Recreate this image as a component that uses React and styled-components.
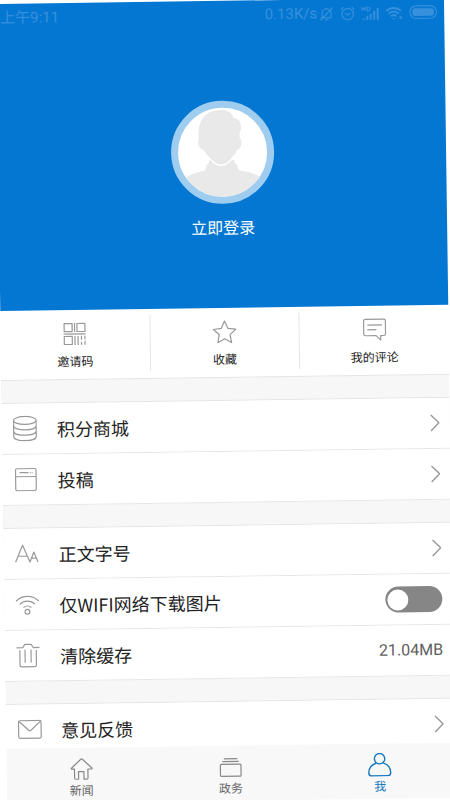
import { useState } from "react";
import styled, { createGlobalStyle } from "styled-components";

const GlobalStyle = createGlobalStyle`
  * {
    box-sizing: border-box;
  }

  body {
    margin: 0;
    background-color: white;
    color: #222;
    font-family: Roboto, "Noto Sans CJK SC", sans-serif;
  }

  button {
    border: 0;
    padding: 0;
    background: none;
    color: inherit;
    font: inherit;
    cursor: pointer;
  }

  a {
    color: inherit;
    text-decoration: none;
  }
`;

const Page = styled.div`
  height: 100vh;
  overflow: hidden;
`;

const Screen = styled.div`
  display: flex;
  flex-direction: column;
  height: 100%;
  margin: 4px 6px 0 -4px;
  background-color: white;
  transform: rotate(-0.8deg);
  transform-origin: 0 0;
`;

const Header = styled.header`
  flex: none;
  display: flex;
  flex-direction: column;
  align-items: center;
  height: 307px;
  background-color: #0477d2;
`;

const StatusBar = styled.div`
  display: flex;
  align-items: center;
  width: 100%;
  height: 28px;
  padding: 0 7px 0 4px;
  color: #3790dc;
  font-size: 15px;
  line-height: 20px;
`;

const StatusIcons = styled.div`
  display: flex;
  align-items: center;
  gap: 6px;
  margin-left: 2px;
`;

const Speed = styled.span`
  margin-left: auto;
`;

const Login = styled.button`
  display: flex;
  flex-direction: column;
  align-items: center;
  gap: 13px;
  margin-top: 72px;
  color: white;
  font-size: 16px;
  line-height: 24px;
`;

const Avatar = styled.span`
  width: 103px;
  height: 103px;
  border: 7px solid #9fcdef;
  border-radius: 50%;
  background-color: white;
  overflow: hidden;

  svg {
    display: block;
  }
`;

const Shortcuts = styled.nav`
  flex: none;
  display: flex;
  height: 70px;
  padding: 6px 0 7px;
  border-bottom: 1px solid #e4e4e4;
`;

const Shortcut = styled.button`
  flex: 1;
  display: flex;
  flex-direction: column;
  align-items: center;
  justify-content: flex-start;
  gap: 7px;
  padding-top: 6px;
  font-size: 12px;
  line-height: 18px;

  & + & {
    border-left: 1px solid #e4e4e4;
  }
`;

const Settings = styled.main`
  flex: 1;
  min-height: 0;
  overflow: hidden;
`;

const Group = styled.section`
  padding-top: 23px;
  background: #f7f7f7;
  box-shadow: inset 0 22px #f7f7f7, inset 0 23px #e4e4e4;
`;

const Row = styled.div`
  display: flex;
  align-items: center;
  width: 100%;
  height: 51px;
  padding: 0 10px 0 11px;
  border-bottom: 1px solid #e6e6e6;
  background-color: white;
  font-size: 18px;
  line-height: 26px;
  text-align: left;
`;

const RowIcon = styled.span`
  display: flex;
  width: 24px;
  margin-right: 20px;
`;

const RowLabel = styled.span`
  flex: 1;
  font-family: "Noto Sans CJK SC", sans-serif;
`;

const Value = styled.span`
  color: #606060;
  font-size: 16px;
`;

const Toggle = styled.input`
  appearance: none;
  display: flex;
  align-items: center;
  width: 57px;
  height: 26px;
  margin: 0;
  padding: 0 2px;
  border-radius: 13px;
  background-color: ${(props) => (props.checked ? "#0477d2" : "#868686")};
  cursor: pointer;

  &::before {
    content: "";
    width: 21px;
    height: 21px;
    margin-left: ${(props) => (props.checked ? "auto" : "0")};
    border-radius: 50%;
    background-color: white;
  }
`;

const TabBar = styled.nav`
  flex: none;
  display: flex;
  height: 55px;
  background-color: #f8f8f9;
`;

const Tab = styled.a`
  flex: 1;
  display: flex;
  flex-direction: column;
  align-items: center;
  gap: 1px;
  padding-top: 9px;
  color: ${(props) => (props.$active ? "#1577bd" : "#666")};
  font-size: 12px;
  line-height: 18px;

  svg {
    color: ${(props) => (props.$active ? "#1577bd" : "#888")};
  }
`;

const Svg = styled.svg`
  flex: none;
  fill: none;
  stroke: currentColor;
  stroke-width: ${(props) => props.$line || 1.2};
  stroke-linejoin: round;
`;

const GreySvg = styled(Svg)`
  color: #999;
`;

const BellOffIcon = () => (
  <Svg width="15" height="15" viewBox="0 0 15 15">
    <path d="M1.5 11.5h11M3 11.2V7a4.4 4.4 0 0 1 8.8-.2v4.4M6 13.4h3M13.8 1 1.2 13.8M7.3 2.6V1.4" />
  </Svg>
);

const AlarmIcon = () => (
  <Svg width="15" height="15" viewBox="0 0 15 15">
    <circle cx="7.5" cy="8" r="5.7" />
    <path d="m4.8 6.8 2.7 2.5 2.7-2.5M.8 3.6 3.4 1M14.2 3.6 11.6 1" />
  </Svg>
);

const SignalIcon = () => (
  <Svg width="18" height="15" viewBox="0 0 18 15">
    <path d="M1 1v4M4 1v4M1 3h3M6 1.2v3.6h1c2.5 0 2.5-3.6 0-3.6z" />
    <path
      d="M1.5 12.5h2V14h-2zM5 10.5h2V14H5zM8.5 8h2v6h-2zM12 5h2v9h-2zM15.5 2h2v12h-2z"
      fill="currentColor"
      stroke="none"
    />
  </Svg>
);

const StatusWifiIcon = () => (
  <Svg width="18" height="15" viewBox="0 0 18 15" $line={1.8}>
    <path d="M1 5.5a11 11 0 0 1 15 0M3.4 8.2a7.4 7.4 0 0 1 10.2 0M5.8 10.8a4 4 0 0 1 5.4 0" />
    <path d="m7 12.6 1.5 1.6 1.5-1.6z" fill="currentColor" stroke="none" />
    <circle cx="15.3" cy="12.3" r="1.3" fill="currentColor" stroke="none" />
  </Svg>
);

const BatteryIcon = () => (
  <Svg width="28" height="14" viewBox="0 0 28 14">
    <rect x=".7" y=".7" width="26.6" height="12.6" rx="6.3" />
    <rect x="3.2" y="3.2" width="21.6" height="7.6" rx="3" fill="currentColor" stroke="none" />
  </Svg>
);

const PersonPlaceholder = () => (
  <svg width="89" height="89" viewBox="0 0 89 89">
    <path
      d="M0 92V74c3-3 5-4 8-5 5-3 11-5 17-6 3-1 3-3 3-6 2-.6 3-2 3-5h25c0 3 1 4.4 3 5 0 3 0 5 3 6 7 1 13 3 19 6 3 1 5 2 8 5v18z"
      fill="#e9e9e9"
    />
    <path
      d="M21 31C19 14 27 2 43 2c7 0 11 3 13 8 6 1 8 6 7 12-1 3-2 5-1 9 3 1 2 9-2 11-2 5-5 8-8 11-3 3-6 4-9 4s-6-1-9-4c-3-3-7-6-9-11-5-3-6-9-4-11z"
      fill="#e9e9e9"
    />
    <path
      d="M25 42c2 5 6 8 9 11 3 3 6 4.4 9 4.4s6-1.4 9-4.4c3-3 6-6 8-11"
      fill="none"
      stroke="white"
      strokeWidth="1.6"
    />
  </svg>
);

const QrIcon = () => (
  <GreySvg width="24" height="24" viewBox="0 0 24 24">
    <path d="M1.6 1.6h8v8h-8zM14.4 1.6h8v8h-8zM1.6 14.4h8v8h-8zM12 1v9M1 12h22M12.3 14v9M15.4 14v9M18.8 14v4M18.8 20v3M22.3 14v3.5M22.3 19v4" />
  </GreySvg>
);

const StarIcon = () => (
  <GreySvg width="24" height="24" viewBox="0 0 24 24">
    <path d="m12 1.2 3.3 7.3 7.9 1-5.8 5.4 1.5 7.9-6.9-3.9-6.9 3.9 1.5-7.9L.8 9.5l7.9-1z" />
  </GreySvg>
);

const CommentIcon = () => (
  <GreySvg width="24" height="24" viewBox="0 0 24 24">
    <path d="M2.8 1.5h18.4a1.7 1.7 0 0 1 1.7 1.7v13a1.7 1.7 0 0 1-1.7 1.7H18v4.5l-4.5-4.5H2.8a1.7 1.7 0 0 1-1.7-1.7v-13a1.7 1.7 0 0 1 1.7-1.7zM4.8 7.3h14.7M4.8 12h9" />
  </GreySvg>
);

const CoinsIcon = () => (
  <GreySvg width="24" height="26" viewBox="0 0 24 26">
    <ellipse cx="12" cy="4.8" rx="11.3" ry="4" />
    <path d="M.7 4.8V21c0 5.3 22.6 5.3 22.6 0V4.8M.7 10.2c0 5.3 22.6 5.3 22.6 0M.7 15.6c0 5.3 22.6 5.3 22.6 0" />
  </GreySvg>
);

const DraftIcon = () => (
  <GreySvg width="24" height="24" viewBox="0 0 24 24">
    <rect x="2" y="1" width="20.5" height="22" rx="1.5" />
    <path d="M2 9h20.5M6 5h9M16.2 5h1M18.2 5h.8" />
  </GreySvg>
);

const FontSizeIcon = () => (
  <GreySvg width="24" height="24" viewBox="0 0 24 24">
    <path d="M.8 20.5 8 3.5l7.2 17 4-10 4 10M3.5 14.5h9M16.8 16.5h4.8" />
  </GreySvg>
);

const WifiIcon = () => (
  <GreySvg width="24" height="24" viewBox="0 0 24 24">
    <path d="M.6 8.6a16 16 0 0 1 22.8 0M4.3 11.6a11 11 0 0 1 15.4 0M8 14.9a6 6 0 0 1 8 0" />
    <circle cx="12" cy="19.2" r="2.4" />
  </GreySvg>
);

const TrashIcon = () => (
  <GreySvg width="24" height="26" viewBox="0 0 24 26">
    <path d="M.5 5h6.3l2-3.3h6.4l2 3.3h6.3M3.8 7.6v14.8a1.8 1.8 0 0 0 1.8 1.8h12.8a1.8 1.8 0 0 0 1.8-1.8V7.6M9 7v13M15 7v13" />
  </GreySvg>
);

const MailIcon = () => (
  <GreySvg width="26" height="20" viewBox="0 0 26 20">
    <rect x="1.5" y="1" width="22.5" height="17.6" rx="1.5" />
    <path d="m2 1.7 9.6 9c.7.6 1.5.6 2.2 0l9.7-9" />
  </GreySvg>
);

const Chevron = () => (
  <GreySvg width="10" height="18" viewBox="0 0 10 18" $line={1.4}>
    <path d="m1 1 8 8-8 8" />
  </GreySvg>
);

const HomeIcon = () => (
  <Svg width="24" height="24" viewBox="0 0 24 24">
    <path d="M11.2 2.4 1.8 11.2c-.4.5-.2 1 .4 1h2.6v8.9c0 .8.4 1.2 1.2 1.2h2.8v-7.5h5.4v7.5H17c.8 0 1.200-.4 1.200-1.200v-8.900h3.600c.6 0 .8-.5.4-1l-9.400-8.800c-.5-.5-1.100-.5-1.600 0z" />
  </Svg>
);

const AffairsIcon = () => (
  <Svg width="24" height="24" viewBox="0 0 24 24">
    <rect x="1.7" y="9.5" width="20.6" height="12" rx="1" />
    <path d="M3.8 6.7h16.4M5.3 4h13.4" />
  </Svg>
);

const MeIcon = () => (
  <Svg width="24" height="24" viewBox="0 0 24 24" $line={1.4}>
    <circle cx="12" cy="6" r="5.2" />
    <path d="M8.3 10.5C3.800 12 1 15.300 1 20c0 2 .8 3 2.800 3h16.400c2 0 2.800-1 2.800-3 0-4.700-2.800-8-7.300-9.500" />
  </Svg>
);

const shortcuts = [
  { label: "邀请码", icon: <QrIcon /> },
  { label: "收藏", icon: <StarIcon /> },
  { label: "我的评论", icon: <CommentIcon /> },
];

const tabs = [
  { label: "新闻", icon: <HomeIcon /> },
  { label: "政务", icon: <AffairsIcon /> },
  { label: "我", icon: <MeIcon />, active: true },
];

const LinkRow = ({ icon, label, children }) => (
  <Row as="button" type="button">
    <RowIcon>{icon}</RowIcon>
    <RowLabel>{label}</RowLabel>
    {children || <Chevron />}
  </Row>
);

const App = () => {
  const [wifiOnly, setWifiOnly] = useState(false);

  return (
    <>
      <GlobalStyle />
      <Page>
        <Screen>
          <Header>
            <StatusBar>
              <span>上午9:11</span>
              <Speed>0.13K/s</Speed>
              <StatusIcons>
                <BellOffIcon />
                <AlarmIcon />
                <SignalIcon />
                <StatusWifiIcon />
                <BatteryIcon />
              </StatusIcons>
            </StatusBar>
            <Login type="button">
              <Avatar>
                <PersonPlaceholder />
              </Avatar>
              立即登录
            </Login>
          </Header>
          <Shortcuts>
            {shortcuts.map((item) => (
              <Shortcut type="button" key={item.label}>
                {item.icon}
                {item.label}
              </Shortcut>
            ))}
          </Shortcuts>
          <Settings>
            <Group>
              <LinkRow icon={<CoinsIcon />} label="积分商城" />
              <LinkRow icon={<DraftIcon />} label="投稿" />
            </Group>
            <Group>
              <LinkRow icon={<FontSizeIcon />} label="正文字号" />
              <Row as="label" htmlFor="wifi-only">
                <RowIcon>
                  <WifiIcon />
                </RowIcon>
                <RowLabel>仅WIFI网络下载图片</RowLabel>
                <Toggle
                  id="wifi-only"
                  type="checkbox"
                  checked={wifiOnly}
                  onChange={(e) => setWifiOnly(e.target.checked)}
                />
              </Row>
              <LinkRow icon={<TrashIcon />} label="清除缓存">
                <Value>21.04MB</Value>
              </LinkRow>
            </Group>
            <Group>
              <LinkRow icon={<MailIcon />} label="意见反馈" />
            </Group>
          </Settings>
          <TabBar>
            {tabs.map((tab) => (
              <Tab href="#" key={tab.label} $active={tab.active}>
                {tab.icon}
                {tab.label}
              </Tab>
            ))}
          </TabBar>
        </Screen>
      </Page>
    </>
  );
};

export default App;
